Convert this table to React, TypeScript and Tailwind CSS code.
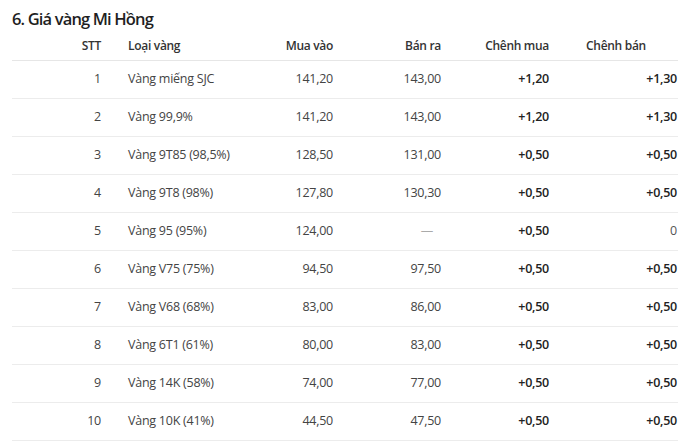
import React from 'react';

type Row = {
  stt: number;
  name: string;
  buy: string;
  sell: string;
  diffBuy: string;
  diffSell: string;
};

const rows: Row[] = [
  { stt: 1, name: 'Vàng miếng SJC', buy: '141,20', sell: '143,00', diffBuy: '+1,20', diffSell: '+1,30' },
  { stt: 2, name: 'Vàng 99,9%', buy: '141,20', sell: '143,00', diffBuy: '+1,20', diffSell: '+1,30' },
  { stt: 3, name: 'Vàng 9T85 (98,5%)', buy: '128,50', sell: '131,00', diffBuy: '+0,50', diffSell: '+0,50' },
  { stt: 4, name: 'Vàng 9T8 (98%)', buy: '127,80', sell: '130,30', diffBuy: '+0,50', diffSell: '+0,50' },
  { stt: 5, name: 'Vàng 95 (95%)', buy: '124,00', sell: '—', diffBuy: '+0,50', diffSell: '0' },
  { stt: 6, name: 'Vàng V75 (75%)', buy: '94,50', sell: '97,50', diffBuy: '+0,50', diffSell: '+0,50' },
  { stt: 7, name: 'Vàng V68 (68%)', buy: '83,00', sell: '86,00', diffBuy: '+0,50', diffSell: '+0,50' },
  { stt: 8, name: 'Vàng 6T1 (61%)', buy: '80,00', sell: '83,00', diffBuy: '+0,50', diffSell: '+0,50' },
  { stt: 9, name: 'Vàng 14K (58%)', buy: '74,00', sell: '77,00', diffBuy: '+0,50', diffSell: '+0,50' },
  { stt: 10, name: 'Vàng 10K (41%)', buy: '44,50', sell: '47,50', diffBuy: '+0,50', diffSell: '+0,50' },
];

const App = () => {
  return (
    <div className="bg-white w-[700px] h-[442px] overflow-hidden px-3 pt-[7px] font-['Open_Sans',sans-serif]">
      <h2 className="text-[16.5px] leading-6 font-semibold text-[#1f1f1f] tracking-[-0.85px]">6. Giá vàng Mi Hồng</h2>
      <table className="table-fixed border-collapse w-[666px] mt-[1px] text-[12.5px] tracking-[-0.25px]">
        <colgroup>
          <col className="w-[101px]" />
          <col className="w-[120px]" />
          <col className="w-[112px]" />
          <col className="w-[108px]" />
          <col className="w-[108px]" />
          <col className="w-[117px]" />
        </colgroup>
        <thead>
          <tr className="h-[28px] border-b border-[#e6e6e6] text-[#333] text-[12px] tracking-[-0.3px]">
            <th className="text-right pr-3 font-semibold">STT</th>
            <th className="text-left pl-[15px] font-semibold">Loại vàng</th>
            <th className="text-right pr-3 font-semibold">Mua vào</th>
            <th className="text-right pr-3 font-semibold">Bán ra</th>
            <th className="text-right pr-3 font-semibold">Chênh mua</th>
            <th className="text-left pl-[25px] font-semibold">Chênh bán</th>
          </tr>
        </thead>
        <tbody>
          {rows.map((r) => (
            <tr key={r.stt} className="h-[38px] border-b border-[#ececec] text-[#444]">
              <td className="text-right pr-3">{r.stt}</td>
              <td className="text-left pl-[15px]">{r.name}</td>
              <td className="text-right pr-3">{r.buy}</td>
              <td className={r.sell === '—' ? 'text-right pr-[20px] text-[#aaa]' : 'text-right pr-3'}>{r.sell}</td>
              <td className="text-right pr-3 font-semibold text-[#222]">{r.diffBuy}</td>
              <td className={r.diffSell === '0' ? 'text-right pr-[1px] text-[#555]' : 'text-right pr-[1px] font-semibold text-[#222]'}>
                {r.diffSell}
              </td>
            </tr>
          ))}
        </tbody>
      </table>
    </div>
  );
};

export default App;
